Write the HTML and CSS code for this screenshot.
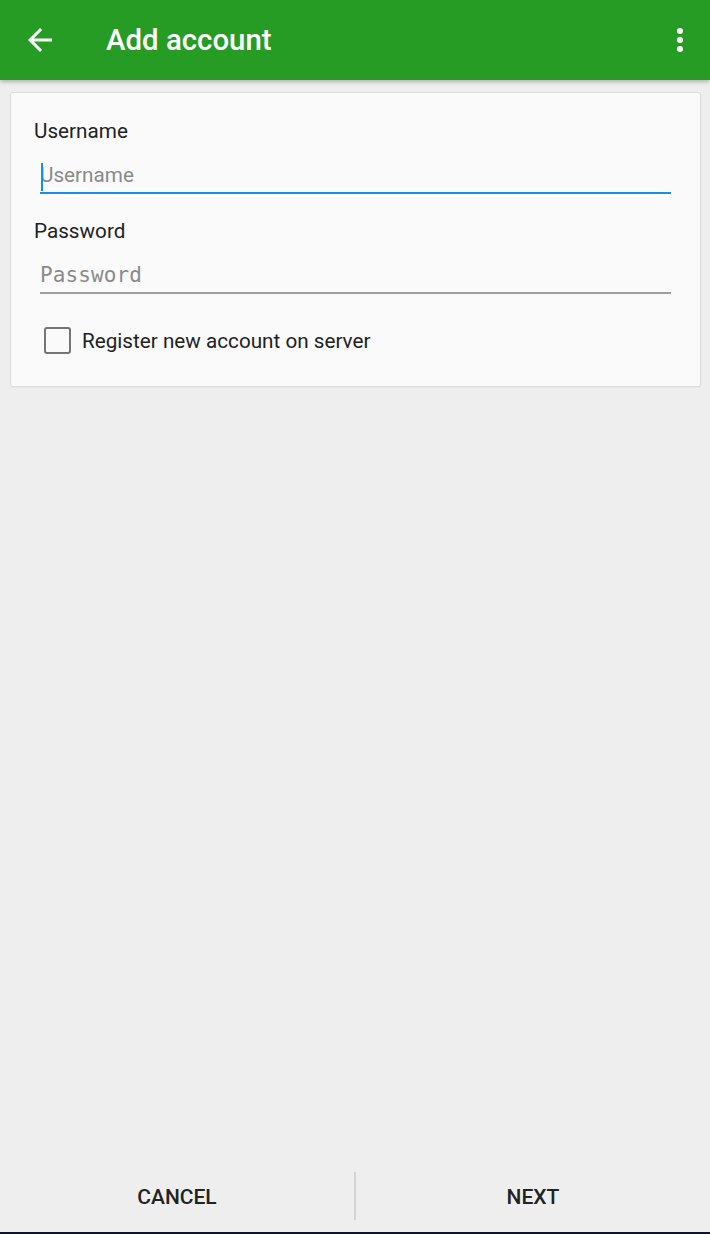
FILE: index.html
```html
<!DOCTYPE html>
<html>
<head>
<meta charset="utf-8">
<link rel="stylesheet" href="styles.css">
</head>
<body>
<div class="screen">
  <header class="appbar">
    <button class="icon-btn back" aria-label="Back">
      <svg width="36" height="36" viewBox="0 0 24 24"><path d="M20 11H7.83l5.59-5.59L12 4l-8 8 8 8 1.41-1.41L7.83 13H20v-2z" fill="#fff"/></svg>
    </button>
    <h1 class="title">Add account</h1>
    <div class="spacer"></div>
    <button class="icon-btn more" aria-label="More">
      <span class="dot"></span><span class="dot"></span><span class="dot"></span>
    </button>
  </header>

  <main class="content">
    <section class="card">
      <div class="field">
        <label class="field-label">Username</label>
        <div class="input focused"><span class="cursor"></span><span class="placeholder">Username</span></div>
      </div>
      <div class="field">
        <label class="field-label">Password</label>
        <div class="input"><span class="placeholder mono">Password</span></div>
      </div>
      <div class="check-row">
        <span class="checkbox"></span>
        <span class="check-label">Register new account on server</span>
      </div>
    </section>
  </main>

  <footer class="actions">
    <button class="action">CANCEL</button>
    <span class="divider"></span>
    <button class="action">NEXT</button>
  </footer>
  <div class="navbar"></div>
</div>
</body>
</html>
```

FILE: styles.css
```css
* { box-sizing: border-box; }
html, body { margin: 0; padding: 0; }
body {
  background: #eeeeee;
  font-family: Roboto, "Noto Sans", sans-serif;
  color: #222;
}
.screen {
  width: 710px;
  height: 1234px;
  display: flex;
  flex-direction: column;
}
.appbar {
  height: 80px;
  flex: none;
  background: #279c25;
  display: flex;
  align-items: center;
  box-shadow: 0 2px 4px rgba(0,0,0,0.25);
  position: relative;
  z-index: 1;
}
.icon-btn {
  background: none;
  border: 0;
  padding: 0;
  display: flex;
  align-items: center;
  justify-content: center;
}
.back {
  width: 36px;
  height: 36px;
  margin-left: 22px;
}
.title {
  margin: 0 0 0 48px;
  color: #fff;
  font-size: 29.4px;
  font-weight: 500;
}
.spacer { flex: 1; }
.more {
  flex-direction: column;
  gap: 3px;
  width: 20px;
  margin-right: 20px;
}
.dot {
  width: 6px;
  height: 6px;
  border-radius: 50%;
  background: #fff;
}
.content {
  flex: 1;
  padding: 12px 9px 0 10px;
}
.card {
  background: #fafafa;
  border: 1px solid #dcdcdc;
  border-radius: 3px;
  padding: 26px 29px 32px 23px;
  box-shadow: 0 1px 1px rgba(0,0,0,0.04);
}
.field {
  display: flex;
  flex-direction: column;
}
.field + .field { margin-top: 25px; }
.field-label {
  font-size: 20.7px;
  line-height: 24px;
  color: #222;
}
.input {
  margin: 14px 0 0 6px;
  height: 37px;
  display: flex;
  align-items: center;
  border-bottom: 2px solid #9e9e9e;
  position: relative;
}
.input.focused { border-bottom-color: #1a8fe8; }
.placeholder {
  font-size: 20.7px;
  color: #8a8a8a;
}
.placeholder.mono {
  font-family: "DejaVu Sans Mono", monospace;
  font-size: 21px;
  letter-spacing: 0.1px;
}
.cursor {
  position: absolute;
  left: 1px;
  top: 6px;
  width: 2px;
  height: 28px;
  background: #1a8fe8;
}
.check-row {
  display: flex;
  align-items: center;
  margin: 33px 0 0 10px;
}
.checkbox {
  width: 27px;
  height: 27px;
  border: 2.5px solid #757575;
  border-radius: 3px;
  flex: none;
}
.check-label {
  margin-left: 11px;
  font-size: 20.7px;
  color: #222;
}
.actions {
  height: 72px;
  flex: none;
  display: flex;
  align-items: center;
}
.action {
  flex: 1;
  background: none;
  border: 0;
  height: 72px;
  padding: 2px 0 0;
  font-family: Roboto, sans-serif;
  font-weight: 500;
  font-size: 21px;
  color: #222;
}
.divider {
  width: 2px;
  height: 48px;
  background: #d4d4d4;
  flex: none;
}
.navbar {
  height: 2px;
  background: #12122a;
  flex: none;
}
```
